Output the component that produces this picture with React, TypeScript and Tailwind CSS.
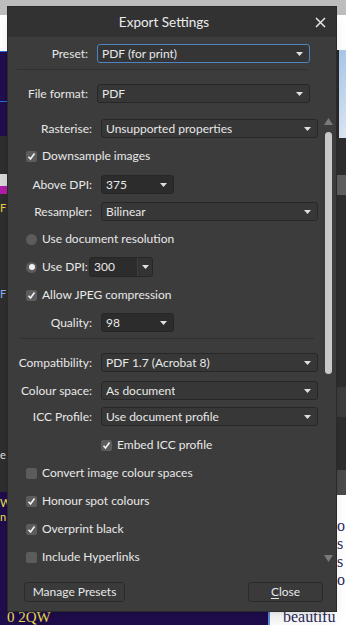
import React from 'react';

function Arrow() {
  return (
    <svg width="7" height="4" viewBox="0 0 7 4" className="shrink-0">
      <path d="M0 0h7L3.5 4z" fill="#e0e0e0" />
    </svg>
  );
}

function Select({ value, w, dark, focus }: { value: string; w: string; dark?: boolean; focus?: boolean }) {
  return (
    <div
      className={`${w} shrink-0 h-[19px] flex items-center justify-between rounded-[3px] border pl-[4px] pr-[6px] ${
        focus ? 'border-[#4f83c2] bg-[#353535]' : dark ? 'border-[#262626] bg-[#2c2c2c]' : 'border-[#272727] bg-[#373737]'
      }`}
    >
      <span className="truncate">{value}</span>
      <Arrow />
    </div>
  );
}

function Check({ checked }: { checked?: boolean }) {
  return (
    <div className="w-[11px] h-[11px] rounded-[2px] bg-[#5c5c5c] flex items-center justify-center shrink-0">
      {checked && (
        <svg width="9" height="9" viewBox="0 0 9 9">
          <path d="M1.5 4.8l2 2.2 4-5.5" stroke="#f4f4f4" strokeWidth="1.6" fill="none" />
        </svg>
      )}
    </div>
  );
}

function Radio({ on }: { on?: boolean }) {
  return (
    <div className="w-[11px] h-[11px] rounded-full bg-[#5c5c5c] flex items-center justify-center shrink-0">
      {on && <div className="w-[6px] h-[6px] rounded-full bg-[#f0f0f0]" />}
    </div>
  );
}

function CheckRow({ label, checked, pl = 'pl-[18px]' }: { label: string; checked?: boolean; pl?: string }) {
  return (
    <div className={`col-span-2 ${pl} h-[20px] flex items-center gap-[5px] whitespace-nowrap`}>
      <Check checked={checked} />
      <span>{label}</span>
    </div>
  );
}

function Label({ children }: { children: React.ReactNode }) {
  return <div className="text-right whitespace-nowrap self-center">{children}</div>;
}

function Backdrop() {
  return (
    <div className="flex w-[346px] h-[625px]">
      <div className="w-[7px] flex flex-col">
        <div className="h-[15px] bg-[#bdbdbd]" />
        <div className="h-[36px] bg-white" />
        <div className="h-[1px] bg-[#2b6cd6]" />
        <div className="h-[49px] bg-[#1f0d4d]" />
        <div className="h-[1px] bg-[#2b6cd6]" />
        <div className="h-[34px] bg-[#1f0d4d]" />
        <div className="h-[356px] bg-[#2e2e2e] flex flex-col">
          <div className="mt-[38px] h-[12px] bg-[#d8d8d8]" />
          <div className="h-[8px] bg-[#b01ea8]" />
          <div className="mt-[8px] text-[11px] leading-none text-[#f0d040]">F</div>
          <div className="mt-[75px] text-[11px] leading-none text-[#8fb0ff]">F</div>
          <div className="mt-[150px] text-[11px] leading-none text-[#e0e0e0]">e</div>
        </div>
        <div className="flex-1 bg-[#1f0d4d] text-[11px] leading-[14px] text-[#f2e24a]">
          <div className="mt-[4px]">W</div>
          <div>n</div>
        </div>
      </div>
      <div className="flex-1 flex flex-col">
        <div className="h-[15px] bg-[#bdbdbd]" />
        <div className="flex-1 bg-[#2e2e2e]" />
        <div className="h-[13px] flex">
          <div className="w-[261px] bg-[#1f0d4d] text-[15px] leading-[10px] text-[#f2e24a] font-['Liberation_Serif',serif]">0 2QW</div>
          <div className="w-[2px] bg-[#5a8ee0]" />
          <div className="flex-1 bg-white pl-[13px] text-[16px] leading-[10px] text-[#2b2b5a] font-['Liberation_Serif',serif]">beautifu</div>
        </div>
      </div>
      <div className="w-[9px] flex flex-col">
        <div className="h-[15px] bg-[#bdbdbd]" />
        <div className="h-[35px] bg-white" />
        <div className="h-[88px] flex">
          <div className="w-[2px] bg-[#2a2a2a]" />
          <div className="flex-1 bg-gradient-to-b from-[#a9c8ea] to-[#dbe7f4]" />
        </div>
        <div className="h-[37px] bg-[#2e2e2e]" />
        <div className="h-[20px] bg-[#5f5f5f]" />
        <div className="h-[30px] bg-[#2e2e2e]" />
        <div className="h-[162px] bg-[#2e2e2e]" />
        <div className="h-[30px] bg-[#3d3d3d]" />
        <div className="h-[53px] bg-[#2e2e2e]" />
        <div className="h-[25px] bg-[#4a4a4a]" />
        <div className="flex-1 bg-white text-[16px] leading-[18px] text-[#2b2b5a] font-['Liberation_Serif',serif] overflow-hidden">
          <div className="mt-[22px]">o</div>
          <div>s</div>
          <div>s</div>
          <div>o</div>
        </div>
      </div>
    </div>
  );
}

export default function App() {
  return (
    <div className="relative w-[346px] h-[625px] overflow-hidden font-['Lato','Noto_Sans',sans-serif] text-[12px] text-[#e8e8e8]">
      <Backdrop />
      <div className="absolute left-[7px] top-[6px] w-[330px] h-[606px] bg-[#3c3c3c] border border-[#2a2a2a] flex flex-col shadow-lg">
        <div className="h-[30px] bg-[#323232] flex items-center relative shrink-0">
          <div className="flex-1 text-center pr-[16px] text-[13.5px] text-[#ececec]">Export Settings</div>
          <svg width="11" height="11" viewBox="0 0 11 11" className="absolute right-[10px] top-[10px]">
            <path d="M1 1l9 9M10 1l-9 9" stroke="#e6e6e6" strokeWidth="1.5" />
          </svg>
        </div>

        <div className="mt-[7px] grid grid-cols-[80px_213px] gap-x-[9px]">
          <Label>Preset:</Label>
          <Select value="PDF (for print)" w="w-[213px]" focus />
        </div>
        <div className="mt-[6px] mx-[9px] w-[290px] h-[1px] bg-[#303030]" />
        <div className="mt-[14px] grid grid-cols-[80px_213px] gap-x-[9px]">
          <Label>File format:</Label>
          <Select value="PDF" w="w-[213px]" />
        </div>

        <div className="mt-[7px] h-[462px] flex overflow-hidden">
          <div className="w-[313px] pt-[9px] grid grid-cols-[84px_217px] gap-x-[9px] content-start">
            <Label>Rasterise:</Label>
            <Select value="Unsupported properties" w="w-[217px]" />

            <div className="col-span-2 h-[8px]" />
            <CheckRow label="Downsample images" checked />

            <div className="col-span-2 h-[9px]" />
            <Label>Above DPI:</Label>
            <Select value="375" w="w-[73px]" dark />

            <div className="col-span-2 h-[8px]" />
            <Label>Resampler:</Label>
            <Select value="Bilinear" w="w-[217px]" />

            <div className="col-span-2 h-[8px]" />
            <div className="col-span-2 pl-[18px] h-[20px] flex items-center gap-[5px]">
              <Radio />
              <span>Use document resolution</span>
            </div>

            <div className="col-span-2 h-[8px]" />
            <div className="col-span-2 pl-[18px] h-[20px] flex items-center gap-[5px]">
              <Radio on />
              <span className="w-[42px] shrink-0 whitespace-nowrap">Use DPI:</span>
              <div className="w-[64px] h-[20px] shrink-0 flex rounded-[3px] border border-[#262626] bg-[#2c2c2c]">
                <div className="flex-1 pl-[4px] flex items-center">300</div>
                <div className="w-[15px] border-l border-[#3e3e3e] bg-[#333333] flex items-center justify-center rounded-r-[3px]">
                  <Arrow />
                </div>
              </div>
            </div>

            <div className="col-span-2 h-[8px]" />
            <CheckRow label="Allow JPEG compression" checked />

            <div className="col-span-2 h-[8px]" />
            <Label>Quality:</Label>
            <Select value="98" w="w-[73px]" dark />

            <div className="col-span-2 mt-[6px] ml-[13px] w-[293px] h-[1px] bg-[#303030]" />

            <div className="col-span-2 h-[14px]" />
            <Label>Compatibility:</Label>
            <Select value="PDF 1.7 (Acrobat 8)" w="w-[217px]" />

            <div className="col-span-2 h-[9px]" />
            <Label>Colour space:</Label>
            <Select value="As document" w="w-[217px]" />

            <div className="col-span-2 h-[7px]" />
            <Label>ICC Profile:</Label>
            <Select value="Use document profile" w="w-[217px]" />

            <div className="col-span-2 h-[9px]" />
            <CheckRow label="Embed ICC profile" checked pl="pl-[93px]" />
            <div className="col-span-2 h-[8px]" />
            <CheckRow label="Convert image colour spaces" />
            <div className="col-span-2 h-[8px]" />
            <CheckRow label="Honour spot colours" checked />
            <div className="col-span-2 h-[8px]" />
            <CheckRow label="Overprint black" checked />
            <div className="col-span-2 h-[8px]" />
            <CheckRow label="Include Hyperlinks" />
          </div>
          <div className="w-[14px] flex flex-col items-center">
            <svg width="9" height="7" viewBox="0 0 9 7" className="mt-[8px]">
              <path d="M0 7h9L4.5 0z" fill="#7a7a7a" />
            </svg>
            <div className="mt-[7px] w-[7px] h-[242px] rounded-full bg-[#c9c9c9]" />
            <div className="flex-1" />
            <svg width="9" height="7" viewBox="0 0 9 7" className="mb-[10px]">
              <path d="M0 0h9L4.5 7z" fill="#7a7a7a" />
            </svg>
          </div>
        </div>

        <div className="mt-[10px] flex items-center px-[16px] justify-between">
          <div className="w-[101px] h-[20px] rounded-[3px] border border-[#2a2a2a] bg-[#3a3a3a] flex items-center justify-center">
            Manage Presets
          </div>
          <div className="w-[75px] h-[20px] rounded-[3px] border border-[#2a2a2a] bg-[#3a3a3a] flex items-center justify-center mr-[-3px]">
            <span>
              <span className="underline underline-offset-2">C</span>lose
            </span>
          </div>
        </div>
      </div>
    </div>
  );
}
